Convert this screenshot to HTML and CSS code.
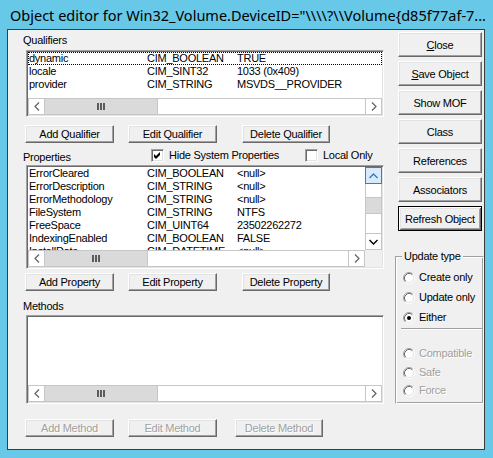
FILE: index.html
```html
<!DOCTYPE html>
<html>
<head>
<meta charset="utf-8">
<title>Object editor</title>
<link rel="stylesheet" href="styles.css">
</head>
<body>
<svg class="defs" xmlns="http://www.w3.org/2000/svg">
  <symbol id="chev-l" viewBox="0 0 6 9"><polyline points="5,0.5 1,4.5 5,8.5" fill="none" stroke="currentColor" stroke-width="1.2"/></symbol>
  <symbol id="chev-r" viewBox="0 0 6 9"><polyline points="1,0.5 5,4.5 1,8.5" fill="none" stroke="currentColor" stroke-width="1.2"/></symbol>
  <symbol id="chev-u" viewBox="0 0 9 6"><polyline points="0.5,5 4.5,1 8.5,5" fill="none" stroke="currentColor" stroke-width="1.4"/></symbol>
  <symbol id="chev-d" viewBox="0 0 9 6"><polyline points="0.5,1 4.5,5 8.5,1" fill="none" stroke="currentColor" stroke-width="1.4"/></symbol>
  <symbol id="grip" viewBox="0 0 8 7"><rect x="0" y="0" width="2" height="7" fill="#5c5c5c"/><rect x="3" y="0" width="2" height="7" fill="#5c5c5c"/><rect x="6" y="0" width="2" height="7" fill="#5c5c5c"/></symbol>
  <symbol id="radio" viewBox="0 0 12 12">
    <circle cx="6" cy="6" r="4.6" fill="#fff"/>
    <path d="M2.11 9.89 A5.5 5.5 0 0 1 9.89 2.11" fill="none" stroke="#a0a0a0"/>
    <path d="M9.89 2.11 A5.5 5.5 0 0 1 2.11 9.89" fill="none" stroke="#ffffff"/>
    <path d="M2.82 9.18 A4.5 4.5 0 0 1 9.18 2.82" fill="none" stroke="#696969"/>
    <path d="M9.18 2.82 A4.5 4.5 0 0 1 2.82 9.18" fill="none" stroke="#e3e3e3"/>
  </symbol>
  <symbol id="check" viewBox="0 0 7 7"><polygon points="0,2 2,4 6,0 6,3 2,7 0,5" fill="#000"/></symbol>
</svg>

<div class="window">
  <div class="titlebar"><span class="title">Object editor for Win32_Volume.DeviceID="\\\\?\\Volume{d85f77af-7...</span></div>
  <div class="client">
    <div class="leftcol">
      <div class="label lbl-qual">Qualifiers</div>
      <div class="listbox lb-qual">
        <div class="lb-body">
          <div class="rows">
            <div class="row focus"><span class="c1">dynamic</span><span class="c2">CIM_BOOLEAN</span><span class="c3">TRUE</span></div>
            <div class="row"><span class="c1">locale</span><span class="c2">CIM_SINT32</span><span class="c3">1033 (0x409)</span></div>
            <div class="row"><span class="c1">provider</span><span class="c2">CIM_STRING</span><span class="c3">MSVDS__PROVIDER</span></div>
          </div>
        </div>
        <div class="lb-bottom">
          <div class="hscroll">
            <div class="sb-arrow sb-left"><svg class="chev-h"><use href="#chev-l"/></svg></div>
            <div class="hthumb thumb-qual"><svg class="grip"><use href="#grip"/></svg></div>
            <div class="htrack"></div>
            <div class="sb-arrow sb-right"><svg class="chev-h"><use href="#chev-r"/></svg></div>
          </div>
        </div>
      </div>
      <div class="btnrow row-qual">
        <button class="btn b-add">Add Qualifier</button>
        <button class="btn b-edit">Edit Qualifier</button>
        <button class="btn b-del">Delete Qualifier</button>
      </div>

      <div class="proprow">
        <div class="label lbl-prop">Properties</div>
        <div class="chk chk-hide"><span class="cb"><svg class="ck"><use href="#check"/></svg></span><span class="chk-text">Hide System Properties</span></div>
        <div class="chk"><span class="cb"></span><span class="chk-text">Local Only</span></div>
      </div>
      <div class="listbox lb-prop">
        <div class="lb-body">
          <div class="rows">
            <div class="row"><span class="c1">ErrorCleared</span><span class="c2">CIM_BOOLEAN</span><span class="c3">&lt;null&gt;</span></div>
            <div class="row"><span class="c1">ErrorDescription</span><span class="c2">CIM_STRING</span><span class="c3">&lt;null&gt;</span></div>
            <div class="row"><span class="c1">ErrorMethodology</span><span class="c2">CIM_STRING</span><span class="c3">&lt;null&gt;</span></div>
            <div class="row"><span class="c1">FileSystem</span><span class="c2">CIM_STRING</span><span class="c3">NTFS</span></div>
            <div class="row"><span class="c1">FreeSpace</span><span class="c2">CIM_UINT64</span><span class="c3">23502262272</span></div>
            <div class="row"><span class="c1">IndexingEnabled</span><span class="c2">CIM_BOOLEAN</span><span class="c3">FALSE</span></div>
            <div class="row"><span class="c1">InstallDate</span><span class="c2">CIM_DATETIME</span><span class="c3">&lt;null&gt;</span></div>
          </div>
          <div class="vscroll">
            <div class="sb-up"><svg class="chev-v"><use href="#chev-u"/></svg></div>
            <div class="vtrack1"></div>
            <div class="vthumb"></div>
            <div class="vtrack2"></div>
            <div class="sb-down"><svg class="chev-v"><use href="#chev-d"/></svg></div>
          </div>
        </div>
        <div class="lb-bottom">
          <div class="hscroll">
            <div class="sb-arrow sb-left"><svg class="chev-h"><use href="#chev-l"/></svg></div>
            <div class="hthumb thumb-prop"><svg class="grip"><use href="#grip"/></svg></div>
            <div class="htrack"></div>
            <div class="sb-arrow sb-right"><svg class="chev-h"><use href="#chev-r"/></svg></div>
          </div>
          <div class="corner"></div>
        </div>
      </div>
      <div class="btnrow row-prop">
        <button class="btn b-add">Add Property</button>
        <button class="btn b-edit">Edit Property</button>
        <button class="btn b-del">Delete Property</button>
      </div>

      <div class="label lbl-meth">Methods</div>
      <div class="listbox lb-meth">
        <div class="lb-body">
          <div class="rows"></div>
        </div>
        <div class="lb-bottom">
          <div class="hscroll">
            <div class="sb-arrow sb-left"><svg class="chev-h"><use href="#chev-l"/></svg></div>
            <div class="hthumb thumb-qual"><svg class="grip"><use href="#grip"/></svg></div>
            <div class="htrack"></div>
            <div class="sb-arrow sb-right"><svg class="chev-h"><use href="#chev-r"/></svg></div>
          </div>
        </div>
      </div>
      <div class="btnrow row-meth">
        <button class="btn b-add disabled">Add Method</button>
        <button class="btn b-edit disabled">Edit Method</button>
        <button class="btn b-mdel disabled">Delete Method</button>
      </div>
    </div>

    <div class="rightcol">
      <button class="btn rbtn"><u>C</u>lose</button>
      <button class="btn rbtn"><u>S</u>ave Object</button>
      <button class="btn rbtn">Show MOF</button>
      <button class="btn rbtn">Class</button>
      <button class="btn rbtn">References</button>
      <button class="btn rbtn">Associators</button>
      <button class="btn rbtn default">Refresh Object</button>

      <div class="group">
        <span class="group-title">Update type</span>
        <div class="radio r1"><svg class="rd"><use href="#radio"/></svg><span>Create only</span></div>
        <div class="radio r2"><svg class="rd"><use href="#radio"/></svg><span>Update only</span></div>
        <div class="radio r3"><svg class="rd"><use href="#radio"/></svg><span class="dot"></span><span>Either</span></div>
        <div class="sep"></div>
        <div class="radio r4 off"><svg class="rd"><use href="#radio"/></svg><span>Compatible</span></div>
        <div class="radio r5 off"><svg class="rd"><use href="#radio"/></svg><span>Safe</span></div>
        <div class="radio r6 off"><svg class="rd"><use href="#radio"/></svg><span>Force</span></div>
      </div>
    </div>
  </div>
</div>
</body>
</html>
```

FILE: styles.css
```css
* { box-sizing: border-box; }
html, body { margin: 0; padding: 0; }
body {
  width: 493px;
  height: 458px;
  overflow: hidden;
  background: #68c8e8;
  font-family: "Liberation Sans", Arial, sans-serif;
  font-size: 11px;
  letter-spacing: -0.25px;
  color: #000;
}
.defs { position: absolute; width: 0; height: 0; overflow: hidden; }

.window {
  width: 493px;
  height: 458px;
  padding: 0 8px 8px 7px;
  display: flex;
  flex-direction: column;
  background: #68c8e8;
}
.titlebar {
  height: 29px;
  flex: none;
  display: flex;
  align-items: center;
  padding-left: 3px;
  white-space: nowrap;
  overflow: hidden;
}
.title {
  font-family: "Noto Sans", "Open Sans", sans-serif;
  font-size: 14.5px;
  letter-spacing: 0;
  color: #000;
}
.client {
  flex: 1;
  display: flex;
  border: 1px solid #3c3c3c;
  background: #f0f0f0;
  padding-left: 15px;
}

.leftcol {
  width: 361px;
  display: flex;
  flex-direction: column;
}
.label {
  height: 13px;
  line-height: 13px;
  white-space: nowrap;
}
.lbl-qual { margin-top: 4px; }
.lbl-meth { margin-top: 9px; }

.listbox {
  margin-left: 3px;
  width: 358px;
  border: 1px solid;
  border-color: #a0a0a0 #fff #fff #a0a0a0;
  box-shadow: inset 1px 1px 0 #696969, inset -1px -1px 0 #e3e3e3;
  padding: 1px;
  background: #fff;
  display: flex;
  flex-direction: column;
}
.lb-qual { height: 67px; margin-top: 3px; }
.lb-prop { height: 104px; margin-top: 3px; }
.lb-meth { height: 89px; margin-top: 2px; }

.lb-body { flex: 1; display: flex; min-height: 0; }
.rows { flex: 1; overflow: hidden; }
.row {
  display: flex;
  height: 13px;
  line-height: 13px;
  white-space: nowrap;
}
.row.focus { outline: 1px dotted #000; outline-offset: -1px; }
.c1 { width: 119px; padding-left: 1px; flex: none; }
.c2 { width: 90px; flex: none; }
.c3 { flex: none; }

.lb-bottom { height: 17px; flex: none; display: flex; }
.hscroll {
  flex: 1;
  display: flex;
  border: 1px solid #c6c6c6;
  background: #fff;
}
.sb-arrow {
  width: 16px;
  flex: none;
  display: flex;
  align-items: center;
  justify-content: center;
  color: #606060;
}
.sb-left { border-right: 1px solid #c6c6c6; }
.sb-right { border-left: 1px solid #c6c6c6; }
.chev-h { width: 6px; height: 9px; }
.hthumb {
  flex: none;
  background: #dadada;
  border-right: 1px solid #c6c6c6;
  display: flex;
  align-items: center;
  justify-content: center;
}
.thumb-qual { width: 113px; }
.thumb-prop { width: 103px; }
.grip { width: 8px; height: 7px; }
.htrack { flex: 1; }
.corner { width: 17px; flex: none; background: #f0f0f0; }

.vscroll {
  width: 17px;
  flex: none;
  display: flex;
  flex-direction: column;
  border: 1px solid #c6c6c6;
  background: #fff;
}
.sb-up {
  height: 15px;
  flex: none;
  background: #d8eaf9;
  outline: 1px solid #3c7fb1;
  display: flex;
  align-items: center;
  justify-content: center;
  color: #2f7bbf;
  position: relative;
}
.vtrack1 { height: 14px; flex: none; border-top: 1px solid #c6c6c6; }
.vthumb { height: 17px; flex: none; background: #dadada; border-top: 1px solid #c6c6c6; border-bottom: 1px solid #c6c6c6; }
.vtrack2 { flex: 1; }
.sb-down {
  height: 16px;
  flex: none;
  border-top: 1px solid #c6c6c6;
  display: flex;
  align-items: center;
  justify-content: center;
  color: #000;
}
.chev-v { width: 9px; height: 6px; }

.btn {
  font-family: "Liberation Sans", Arial, sans-serif;
  font-size: 11px;
  letter-spacing: -0.25px;
  color: #000;
  background: #f0f0f0;
  border: 1px solid;
  border-color: #fff #696969 #696969 #fff;
  box-shadow: inset -1px -1px 0 #a0a0a0, inset 1px 1px 0 #e3e3e3;
  padding: 0;
  margin: 0;
  white-space: nowrap;
  flex: none;
}
.btn.disabled { color: #a0a0a0; text-shadow: 1px 1px 0 #fff; }

.btnrow { display: flex; height: 18px; flex: none; }
.btnrow .btn { height: 18px; line-height: 14px; }
.row-qual { margin-top: 8px; }
.row-prop { margin-top: 4px; }
.row-meth { margin-top: 15px; }
.b-add { width: 89px; margin-left: 2px; }
.b-edit { width: 89px; margin-left: 14px; }
.b-del { width: 88px; margin-left: 25px; }
.b-mdel { width: 88px; margin-left: 18px; }

.proprow { display: flex; height: 13px; margin-top: 6px; flex: none; }
.lbl-prop { width: 128px; margin-top: 2px; }
.chk { display: flex; height: 13px; line-height: 13px; white-space: nowrap; }
.chk-hide { width: 154px; }
.cb {
  width: 13px;
  height: 13px;
  flex: none;
  border: 1px solid;
  border-color: #a0a0a0 #fff #fff #a0a0a0;
  box-shadow: inset 1px 1px 0 #696969, inset -1px -1px 0 #e3e3e3;
  background: #fff;
  display: flex;
  align-items: center;
  justify-content: center;
}
.ck { width: 7px; height: 7px; }
.chk-text { margin-left: 5px; }

.rightcol {
  width: 89px;
  margin-left: 11px;
  display: flex;
  flex-direction: column;
  padding-top: 2px;
}
.rbtn {
  width: 84px;
  height: 25px;
  margin-left: 3px;
  margin-bottom: 4px;
}
.rbtn.default {
  border: 1px solid #000;
  box-shadow: inset 1px 1px 0 #fff, inset -1px -1px 0 #696969, inset 2px 2px 0 #e3e3e3, inset -2px -2px 0 #a0a0a0;
}

.group {
  position: relative;
  margin-top: 21px;
  padding: 0 0 0 7px;
  width: 89px;
  height: 148px;
  flex: none;
  border: 1px solid;
  border-color: #a0a0a0 #fff #fff #a0a0a0;
  box-shadow: inset 1px 1px 0 #fff, inset -1px -1px 0 #a0a0a0;
}
.group-title {
  position: absolute;
  top: -7px;
  left: 6px;
  padding: 0 2px;
  line-height: 13px;
  background: #f0f0f0;
  white-space: nowrap;
}
.radio {
  display: flex;
  align-items: center;
  height: 13px;
  line-height: 13px;
  white-space: nowrap;
  position: relative;
}
.rd { width: 12px; height: 12px; flex: none; margin-right: 4px; }
.dot {
  position: absolute;
  left: 4px;
  top: 4.5px;
  width: 4px;
  height: 4px;
  border-radius: 50%;
  background: #000;
}
.r1 { margin-top: 14px; }
.r2 { margin-top: 7px; }
.r3 { margin-top: 7px; }
.sep {
  margin: 4px 0 0 -2px;
  width: 81px;
  height: 2px;
  border-top: 1px solid #a0a0a0;
  border-bottom: 1px solid #fff;
}
.r4 { margin-top: 17px; }
.r5 { margin-top: 6px; }
.r6 { margin-top: 5px; }
.radio.off { color: #a0a0a0; text-shadow: 1px 1px 0 #fff; }
```
